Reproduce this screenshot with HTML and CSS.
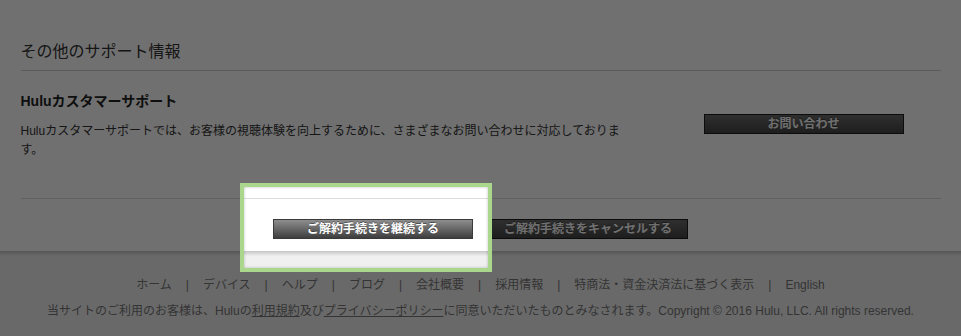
FILE: index.html
```html
<!DOCTYPE html>
<html lang="ja">
    <head>
        <meta charset="utf-8">
        <link rel="stylesheet" href="styles.css">
    </head>
    <body>
        <div id="page">
            <section class="support">
                <h2 class="section-title">その他のサポート情報</h2>
                <div class="support-row">
                    <div class="support-text">
                        <h3>Huluカスタマーサポート</h3>
                        <p>Huluカスタマーサポートでは、お客様の視聴体験を向上するために、さまざまなお問い合わせに対応しております。</p>
                    </div>
                    <div class="support-action">
                        <a class="btn" href="#">お問い合わせ</a>
                    </div>
                </div>
            </section>
            <div class="actions">
                <a class="btn btn-light" href="#">ご解約手続きを継続する</a>
                <a class="btn" href="#">ご解約手続きをキャンセルする</a>
            </div>
        </div>

        <footer id="footer">
            <ul class="footer-links">
                <li><a href="#">ホーム</a></li>
                <li class="sep">|</li>
                <li><a href="#">デバイス</a></li>
                <li class="sep">|</li>
                <li><a href="#">ヘルプ</a></li>
                <li class="sep">|</li>
                <li><a href="#">ブログ</a></li>
                <li class="sep">|</li>
                <li><a href="#">会社概要</a></li>
                <li class="sep">|</li>
                <li><a href="#">採用情報</a></li>
                <li class="sep">|</li>
                <li><a href="#">特商法・資金決済法に基づく表示</a></li>
                <li class="sep">|</li>
                <li><a href="#">English</a></li>
            </ul>
            <p class="copy">当サイトのご利用のお客様は、Huluの<a class="u" href="#">利用規約</a>及び<a class="u" href="#">プライバシーポリシー</a>に同意いただいたものとみなされます。Copyright © 2016 Hulu, LLC. All rights reserved.</p>
        </footer>

        <!-- highlight over the continue button -->
        <div class="spotlight"></div>
    </body>
</html>
```

FILE: styles.css
```css
*{
	margin: 0;
	padding: 0;
}
html,body{
	background: #fff;
	overflow: hidden;
}
body{
	font-family: "Liberation Sans", "Noto Sans CJK JP", sans-serif;
	color: #333;
	font-size: 12px;
}
a{
	color: inherit;
	text-decoration: none;
}
#page{
	width: 920px;
	margin: 0 auto;
}
.support{
	padding-top: 42px;
	padding-bottom: 38px;
}
.section-title{
	font-size: 16px;
	line-height: 20px;
	font-weight: normal;
	padding-bottom: 8px;
	border-bottom: 1px solid #ccc;
}
.support-row{
	display: flex;
	margin-top: 20px;
}
.support-text{
	width: 610px;
}
.support-text h3{
	font-size: 14px;
	line-height: 20px;
	font-weight: bold;
	color: #222;
	margin-bottom: 11px;
}
.support-text p{
	font-size: 12px;
	line-height: 19px;
}
.support-action{
	padding-left: 73px;
	padding-top: 23px;
}
.btn{
	display: block;
	width: 198px;
	height: 18px;
	line-height: 18px;
	border: 1px solid #1c1c1c;
	background: linear-gradient(#6b6b6b, #454545);
	color: #fff;
	font-size: 12px;
	font-weight: bold;
	text-align: center;
	text-shadow: 0 -1px 0 rgba(0,0,0,.4);
}
.btn-light{
	border-color: #3a3a3a;
	background: linear-gradient(#8e8e8e, #3e3e3e);
}
.actions{
	display: flex;
	justify-content: center;
	gap: 15px;
	border-top: 1px solid #ddd;
	padding-top: 20px;
	padding-bottom: 12px;
}
#footer{
	background: linear-gradient(#c6c6c6, #e6e6e6 4px, #f0f0f0 5px);
	padding-top: 21px;
	padding-bottom: 20px;
	color: #777;
	text-align: center;
}
.footer-links{
	list-style: none;
	display: flex;
	justify-content: center;
	line-height: 26px;
	font-size: 12px;
}
.footer-links .sep{
	margin: 0 14px;
}
.copy{
	line-height: 26px;
	font-size: 12px;
}
.copy .u{
	text-decoration: underline;
}
.spotlight{
	position: absolute;
	left: 240px;
	top: 183px;
	width: 244px;
	height: 81px;
	border: 4px solid #aad78c;
	box-shadow: 0 0 0 2000px rgba(0,0,0,.56), inset 0 0 3px rgba(0,0,0,.25);
}
```
